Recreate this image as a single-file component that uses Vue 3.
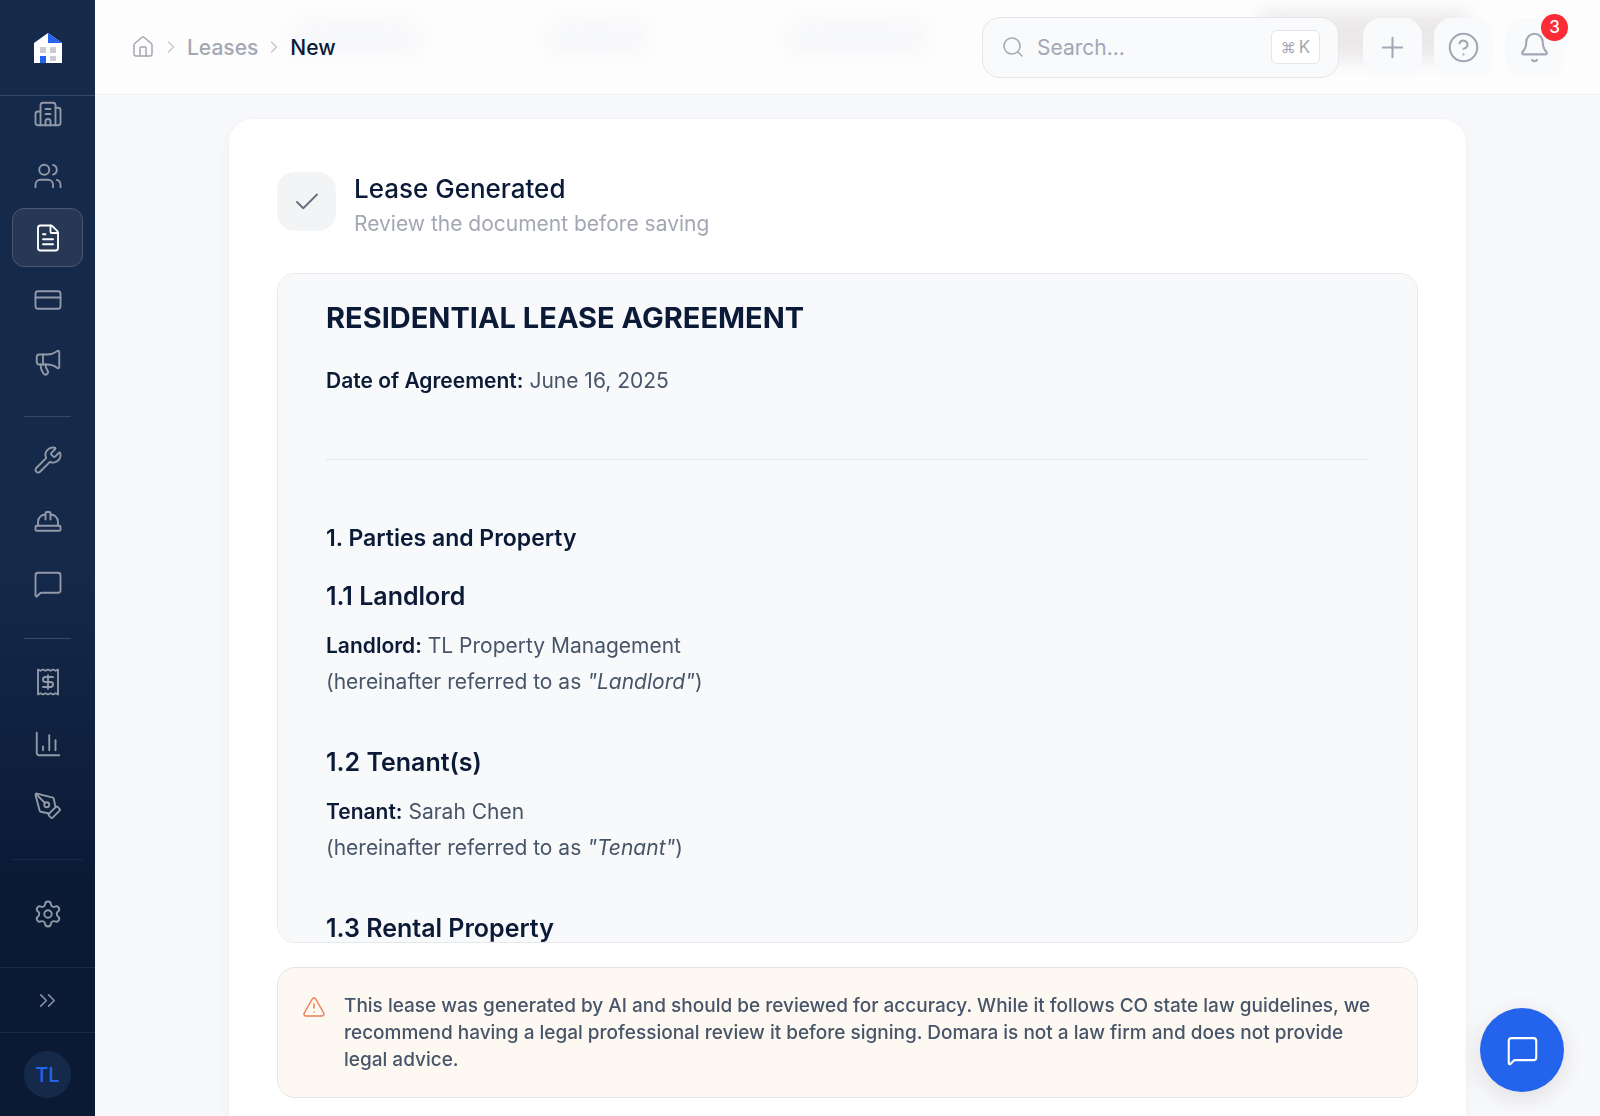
<script setup>
import { h } from 'vue'

const icons = {
  home: ['M15 21v-8a1 1 0 0 0-1-1h-4a1 1 0 0 0-1 1v8', 'M3 10a2 2 0 0 1 .709-1.528l7-5.999a2 2 0 0 1 2.582 0l7 5.999A2 2 0 0 1 21 10v9a2 2 0 0 1-2 2H5a2 2 0 0 1-2-2z'],
  building: ['M10 12h4', 'M10 8h4', 'M14 21v-3a2 2 0 0 0-4 0v3', 'M6 10H4a2 2 0 0 0-2 2v7a2 2 0 0 0 2 2h16a2 2 0 0 0 2-2V9a2 2 0 0 0-2-2h-2', 'M6 21V5a2 2 0 0 1 2-2h8a2 2 0 0 1 2 2v16'],
  users: ['M16 21v-2a4 4 0 0 0-4-4H6a4 4 0 0 0-4 4v2', 'M5 7a4 4 0 1 0 8 0a4 4 0 1 0-8 0', 'M22 21v-2a4 4 0 0 0-3-3.87', 'M16 3.128a4 4 0 0 1 0 7.744'],
  file: ['M6 22a2 2 0 0 1-2-2V4a2 2 0 0 1 2-2h8a2.4 2.4 0 0 1 1.704.706l3.588 3.588A2.4 2.4 0 0 1 20 8v12a2 2 0 0 1-2 2z', 'M14 2v5a1 1 0 0 0 1 1h5', 'M10 9H8', 'M16 13H8', 'M16 17H8'],
  card: ['M4 5h16a2 2 0 0 1 2 2v10a2 2 0 0 1-2 2H4a2 2 0 0 1-2-2V7a2 2 0 0 1 2-2z', 'M2 10h20'],
  megaphone: ['M11 6a13 13 0 0 0 8.4-2.8A1 1 0 0 1 21 4v12a1 1 0 0 1-1.6.8A13 13 0 0 0 11 14H5a2 2 0 0 1-2-2V8a2 2 0 0 1 2-2z', 'M6 14a12 12 0 0 0 2.4 7.2 2 2 0 0 0 3.2-2.4A8 8 0 0 1 10 14', 'M8 6v8'],
  wrench: ['M14.7 6.3a1 1 0 0 0 0 1.4l1.6 1.6a1 1 0 0 0 1.4 0l3.106-3.105c.32-.322.863-.22.983.218a6 6 0 0 1-8.259 7.057l-7.91 7.91a1 1 0 0 1-2.999-3l7.91-7.91a6 6 0 0 1 7.057-8.259c.438.12.54.662.219.984z'],
  hat: ['M10 10V5a1 1 0 0 1 1-1h2a1 1 0 0 1 1 1v5', 'M14 6a6 6 0 0 1 6 6v3', 'M4 15v-3a6 6 0 0 1 6-6', 'M3 15h18a1 1 0 0 1 1 1v2a1 1 0 0 1-1 1H3a1 1 0 0 1-1-1v-2a1 1 0 0 1 1-1z'],
  chat: ['M22 17a2 2 0 0 1-2 2H6.828a2 2 0 0 0-1.414.586l-2.202 2.202A.71.71 0 0 1 2 21.286V5a2 2 0 0 1 2-2h16a2 2 0 0 1 2 2z'],
  receipt: ['M4 2v20l2-1 2 1 2-1 2 1 2-1 2 1 2-1 2 1V2l-2 1-2-1-2 1-2-1-2 1-2-1-2 1Z', 'M16 8h-6a2 2 0 1 0 0 4h4a2 2 0 1 1 0 4H8', 'M12 17.5v-11'],
  chart: ['M3 3v16a2 2 0 0 0 2 2h16', 'M18 17V9', 'M13 17V5', 'M8 17v-3'],
  pen: ['M15.707 21.293a1 1 0 0 1-1.414 0l-1.586-1.586a1 1 0 0 1 0-1.414l5.586-5.586a1 1 0 0 1 1.414 0l1.586 1.586a1 1 0 0 1 0 1.414z', 'm18 13-1.375-6.874a1 1 0 0 0-.746-.776L3.235 2.028a1 1 0 0 0-1.207 1.207L5.35 15.879a1 1 0 0 0 .776.746L13 18', 'm2.3 2.3 7.286 7.286', 'M9 11a2 2 0 1 0 4 0a2 2 0 1 0-4 0'],
  gear: ['M9.671 4.136a2.34 2.34 0 0 1 4.659 0 2.34 2.34 0 0 0 3.319 1.915 2.34 2.34 0 0 1 2.33 4.033 2.34 2.34 0 0 0 0 3.831 2.34 2.34 0 0 1-2.33 4.033 2.34 2.34 0 0 0-3.319 1.915 2.34 2.34 0 0 1-4.659 0 2.34 2.34 0 0 0-3.32-1.915 2.34 2.34 0 0 1-2.33-4.033 2.34 2.34 0 0 0 0-3.831A2.34 2.34 0 0 1 6.35 6.051a2.34 2.34 0 0 0 3.319-1.915', 'M9 12a3 3 0 1 0 6 0a3 3 0 1 0-6 0'],
  expand: ['m6 17 5-5-5-5', 'm13 17 5-5-5-5'],
  chevron: ['m9 18 6-6-6-6'],
  search: ['M3 11a8 8 0 1 0 16 0a8 8 0 1 0-16 0', 'm21 21-4.34-4.34'],
  plus: ['M5 12h14', 'M12 5v14'],
  help: ['M2 12a10 10 0 1 0 20 0a10 10 0 1 0-20 0', 'M9.09 9a3 3 0 0 1 5.83 1c0 2-3 3-3 3', 'M12 17h.01'],
  bell: ['M10.268 21a2 2 0 0 0 3.464 0', 'M3.262 15.326A1 1 0 0 0 4 17h16a1 1 0 0 0 .74-1.673C19.41 13.956 18 12.499 18 8A6 6 0 0 0 6 8c0 4.499-1.411 5.956-2.738 7.326'],
  check: ['M20 6 9 17l-5-5'],
  alert: ['m21.73 18-8-14a2 2 0 0 0-3.48 0l-8 14A2 2 0 0 0 4 21h16a2 2 0 0 0 1.73-3', 'M12 9v4', 'M12 17h.01'],
}

const Icon = (props) =>
  h(
    'svg',
    {
      width: props.size,
      height: props.size,
      viewBox: '0 0 24 24',
      fill: 'none',
      stroke: 'currentColor',
      'stroke-width': 1.5,
      'stroke-linecap': 'round',
      'stroke-linejoin': 'round',
      'aria-hidden': 'true',
    },
    icons[props.name].map((d) => h('path', { d })),
  )
Icon.props = ['name', 'size']

const groups = [
  [
    { icon: 'building', label: 'Properties' },
    { icon: 'users', label: 'Tenants' },
    { icon: 'file', label: 'Leases', active: true },
    { icon: 'card', label: 'Payments' },
    { icon: 'megaphone', label: 'Listings' },
  ],
  [
    { icon: 'wrench', label: 'Maintenance' },
    { icon: 'hat', label: 'Vendors' },
    { icon: 'chat', label: 'Messages' },
  ],
  [
    { icon: 'receipt', label: 'Accounting' },
    { icon: 'chart', label: 'Reports' },
    { icon: 'pen', label: 'Signatures' },
  ],
]

const parties = [
  { title: '1.1 Landlord', role: 'Landlord', name: 'TL Property Management' },
  { title: '1.2 Tenant(s)', role: 'Tenant', name: 'Sarah Chen' },
]
</script>

<template>
  <div class="shell">
    <aside class="sidebar">
      <a class="logo" href="#" aria-label="Domara">
        <svg width="28" height="30" viewBox="0 0 28 30" aria-hidden="true">
          <path d="M0 10 14 0l14 10v20H0z" fill="#fff" />
          <path d="M14 0l14 10H14z" fill="#2463eb" />
          <path d="M6 14h6v6H6zM16 14h6v6h-6zM16 23h6v5h-6z" fill="#c9ccd3" />
          <path d="M6 23h6v7H6z" fill="#2463eb" />
        </svg>
      </a>
      <nav class="nav" aria-label="Main">
        <div v-for="(group, i) in groups" :key="i" class="nav-group">
          <a
            v-for="item in group"
            :key="item.icon"
            href="#"
            class="nav-item"
            :class="{ active: item.active }"
            :aria-label="item.label"
          >
            <Icon :name="item.icon" size="30" />
          </a>
        </div>
      </nav>
      <div class="settings">
        <a href="#" class="nav-item" aria-label="Settings"><Icon name="gear" size="30" /></a>
      </div>
      <button class="expand" type="button" aria-label="Expand sidebar"><Icon name="expand" size="27" /></button>
      <div class="account">
        <button class="avatar" type="button">TL</button>
      </div>
    </aside>

    <div class="main">
      <header class="topbar">
        <div class="backdrop" aria-hidden="true">
          <i class="step one"></i>
          <i class="step two"></i>
          <i class="step three"></i>
          <i class="action"></i>
        </div>
        <nav class="crumbs" aria-label="Breadcrumb">
          <a href="#" aria-label="Home"><Icon name="home" size="24" /></a>
          <Icon name="chevron" size="20" class="sep" />
          <a href="#">Leases</a>
          <Icon name="chevron" size="20" class="sep" />
          <span class="current">New</span>
        </nav>
        <div class="tools">
          <label class="search">
            <Icon name="search" size="24" />
            <input type="text" placeholder="Search..." aria-label="Search" />
            <kbd><span class="cmd">⌘</span><span>K</span></kbd>
          </label>
          <div class="actions">
            <button type="button" aria-label="Add"><Icon name="plus" size="33" /></button>
            <button type="button" aria-label="Help"><Icon name="help" size="33" /></button>
            <button type="button" aria-label="Notifications">
              <Icon name="bell" size="33" />
              <span class="badge">3</span>
            </button>
          </div>
        </div>
      </header>

      <main class="content">
        <section class="card">
          <div class="card-head">
            <div class="check"><Icon name="check" size="30" /></div>
            <div>
              <h2 class="card-title">Lease Generated</h2>
              <p class="card-sub">Review the document before saving</p>
            </div>
          </div>

          <article class="doc">
            <h1>RESIDENTIAL LEASE AGREEMENT</h1>
            <p><strong>Date of Agreement:</strong> June 16, 2025</p>
            <hr />
            <h2>1. Parties and Property</h2>
            <template v-for="p in parties" :key="p.title">
              <h3>{{ p.title }}</h3>
              <p class="party">
                <strong>{{ p.role }}:</strong> {{ p.name }}<br />
                (hereinafter referred to as <em>"{{ p.role }}"</em>)
              </p>
            </template>
            <h3>1.3 Rental Property</h3>
          </article>

          <div class="notice" role="note">
            <Icon name="alert" size="24" />
            <p>
              This lease was generated by AI and should be reviewed for accuracy. While it follows CO state law
              guidelines, we recommend having a legal professional review it before signing. Domara is not a law firm
              and does not provide legal advice.
            </p>
          </div>
        </section>
      </main>
    </div>

    <button class="fab" type="button" aria-label="Open chat"><Icon name="chat" size="33" /></button>
  </div>
</template>

<style>
body {
  margin: 0;
  background: #f8f9fb;
}
</style>

<style scoped>
.shell {
  display: flex;
  height: 100vh;
  overflow: hidden;
  font-family: Inter, 'Liberation Sans', sans-serif;
  font-size: 21px;
  color: #475569;
  background: #f8f9fb;
}
.shell * {
  box-sizing: border-box;
}
svg {
  display: block;
  flex: none;
}
a {
  color: inherit;
  text-decoration: none;
}
button {
  display: flex;
  align-items: center;
  justify-content: center;
  padding: 0;
  border: 0;
  font: inherit;
  color: inherit;
  cursor: pointer;
}
h1,
h2,
h3,
p {
  margin: 0;
}

/* Sidebar */
.sidebar {
  display: flex;
  flex-direction: column;
  flex: none;
  width: 95px;
  color: #9299a7;
  background: linear-gradient(180deg, #15294b 0%, #15294b 50%, #0a1a35 80%, #0a1a35 100%);
}
.logo {
  display: flex;
  align-items: center;
  justify-content: center;
  flex: none;
  height: 96px;
  border-bottom: 1px solid #3a4963;
}
.nav {
  display: flex;
  flex-direction: column;
  justify-content: flex-end;
  flex: 1;
  min-height: 0;
  overflow: hidden;
  padding: 0 12px 24px;
}
.nav-group {
  display: flex;
  flex-direction: column;
  gap: 3px;
}
.nav-group + .nav-group::before {
  content: '';
  width: 47px;
  height: 1px;
  margin: 25px auto 10px;
  background: #3a4963;
}
.nav-item {
  display: flex;
  align-items: center;
  justify-content: center;
  flex: none;
  height: 59px;
  border: 1px solid transparent;
  border-radius: 12px;
}
.nav-item.active {
  color: #fff;
  border-color: #4b586f;
  background: #273854;
}
.settings {
  margin: 0 12px;
  padding: 24px 0;
  border-top: 1px solid #172b4b;
}
.expand {
  flex: none;
  height: 65px;
  color: #858d9b;
  background: none;
  border-top: 1px solid #172b4b;
}
.account {
  display: flex;
  justify-content: center;
  padding: 18px 0;
  border-top: 1px solid #172b4b;
}
.avatar {
  width: 47px;
  height: 47px;
  border-radius: 50%;
  font-size: 20px;
  font-weight: 500;
  color: #2463eb;
  background: #15294b;
}

/* Top bar */
.main {
  display: flex;
  flex-direction: column;
  flex: 1;
  min-width: 0;
}
.topbar {
  position: relative;
  display: flex;
  align-items: center;
  justify-content: space-between;
  flex: none;
  height: 95px;
  padding: 0 36px;
  border-bottom: 1px solid #eff0f2;
  background: #fdfdfe;
}
.backdrop {
  position: absolute;
  inset: 0;
  overflow: hidden;
}
.backdrop i {
  position: absolute;
  filter: blur(10px);
}
.step {
  top: 22px;
  height: 30px;
  border-radius: 12px;
  background: #f6f7f9;
}
.one {
  left: 13%;
  width: 130px;
}
.two {
  left: 30%;
  width: 100px;
}
.three {
  left: 46%;
  width: 140px;
}
.backdrop .action {
  top: 12px;
  right: 132px;
  width: 206px;
  height: 48px;
  background: #ebe8ea;
  filter: blur(9px);
}
.crumbs {
  position: relative;
  display: flex;
  align-items: center;
  gap: 6px;
  font-weight: 500;
  color: #a3a7b3;
}
.crumbs .sep {
  color: #c3c6ce;
}
.current {
  color: #0b1b37;
}
.tools {
  position: relative;
  display: flex;
  align-items: center;
  gap: 24px;
}
.search {
  display: flex;
  align-items: center;
  gap: 12px;
  width: 357px;
  height: 61px;
  padding: 0 18px;
  border: 1px solid #e6e5e8;
  border-radius: 18px;
  color: #a3a7b3;
  background: #f9fafc;
}
.search input {
  flex: 1;
  min-width: 0;
  padding: 0;
  border: 0;
  outline: 0;
  font: inherit;
  color: #0b1b37;
  background: none;
}
.search input::placeholder {
  color: #a3a7b3;
  opacity: 1;
}
kbd {
  display: flex;
  align-items: center;
  justify-content: center;
  gap: 3px;
  width: 49px;
  height: 34px;
  border: 1px solid #e6e5e8;
  border-radius: 6px;
  font: 400 17px Inter, 'DejaVu Sans', sans-serif;
  background: #fff;
}
.cmd {
  font-size: 15px;
}
.actions {
  display: flex;
  gap: 12px;
}
.actions button {
  position: relative;
  width: 59px;
  height: 59px;
  border-radius: 18px;
  color: #a3a7b3;
  background: #f9fafc;
}
.badge {
  position: absolute;
  top: -4px;
  right: -4px;
  width: 27px;
  height: 27px;
  border-radius: 50%;
  font-size: 17px;
  font-weight: 500;
  line-height: 27px;
  text-align: center;
  color: #fff;
  background: #fb2c36;
}

/* Content */
.content {
  flex: 1;
  min-height: 0;
  overflow: hidden;
  padding: 24px 36px;
}
.card {
  max-width: 1237px;
  margin: 0 auto;
  padding: 53px 48px 48px;
  border-radius: 24px;
  background: #fff;
  box-shadow: 0 0 0 1px #f3f3f5, 0 6px 24px rgba(11, 27, 55, 0.04);
}
.card-head {
  display: flex;
  align-items: flex-start;
  gap: 18px;
  margin-bottom: 31px;
}
.check {
  display: flex;
  align-items: center;
  justify-content: center;
  width: 59px;
  height: 59px;
  border-radius: 18px;
  color: #64707f;
  background: #f3f4f6;
}
.card-title {
  font-size: 26px;
  font-weight: 500;
  line-height: 34px;
  color: #0b1b37;
}
.card-sub {
  line-height: 36px;
  color: #a3a7b3;
}
.doc {
  max-height: 60vh;
  overflow-y: auto;
  scrollbar-width: none;
  padding: 24px 48px;
  border: 1px solid #e8e8eb;
  border-radius: 18px;
  line-height: 36px;
  background: #f8f9fb;
}
.doc h1,
.doc h2,
.doc h3,
.doc strong {
  color: #0b1b37;
}
.doc h1 {
  margin-bottom: 25px;
  font-size: 29px;
  font-weight: 700;
  line-height: 40px;
}
.doc hr {
  height: 1px;
  margin: 60px 0;
  border: 0;
  background: #e5e6e9;
}
.doc h2 {
  margin-bottom: 22px;
  font-size: 23px;
  font-weight: 600;
}
.doc h3 {
  margin-bottom: 14px;
  font-size: 25px;
  font-weight: 600;
}
.doc strong {
  font-weight: 600;
}
.party {
  margin-bottom: 44px;
}
.notice {
  display: flex;
  gap: 18px;
  margin-top: 24px;
  padding: 24px 36px 24px 24px;
  border: 1px solid #e6e4e4;
  border-radius: 18px;
  font-size: 19px;
  font-weight: 500;
  line-height: 27px;
  background: #fef8f2;
}
.notice svg {
  margin-top: 3px;
  color: #ec7f55;
}

.fab {
  position: fixed;
  right: 36px;
  bottom: 24px;
  width: 84px;
  height: 84px;
  border-radius: 50%;
  color: #fff;
  background: #2463eb;
  box-shadow: 0 6px 24px rgba(40, 20, 30, 0.12);
}
</style>
